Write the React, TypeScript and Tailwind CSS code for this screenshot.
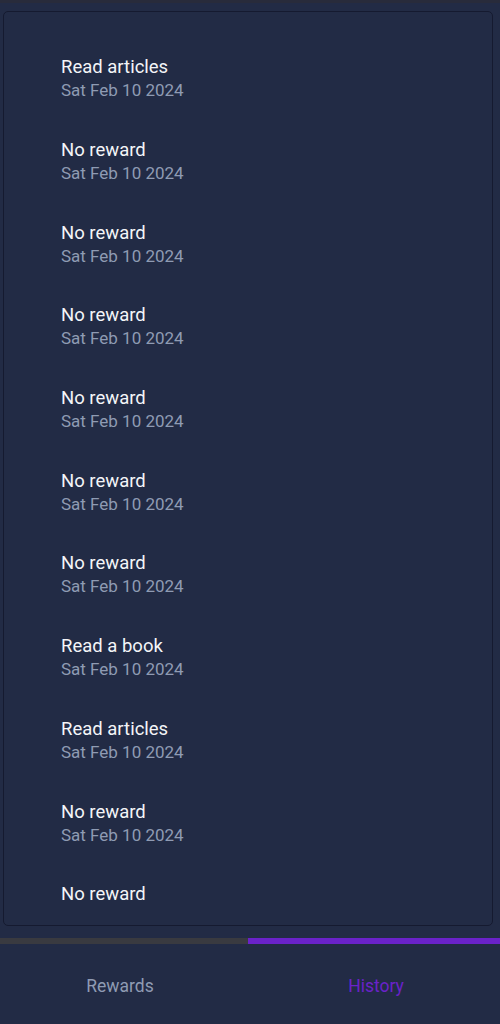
const items: { title: string; date?: string }[] = [
  { title: "Read articles", date: "Sat Feb 10 2024" },
  { title: "No reward", date: "Sat Feb 10 2024" },
  { title: "No reward", date: "Sat Feb 10 2024" },
  { title: "No reward", date: "Sat Feb 10 2024" },
  { title: "No reward", date: "Sat Feb 10 2024" },
  { title: "No reward", date: "Sat Feb 10 2024" },
  { title: "No reward", date: "Sat Feb 10 2024" },
  { title: "Read a book", date: "Sat Feb 10 2024" },
  { title: "Read articles", date: "Sat Feb 10 2024" },
  { title: "No reward", date: "Sat Feb 10 2024" },
  { title: "No reward" },
];

export default function App() {
  return (
    <div className="w-[500px] h-[1024px] bg-[#222b45] flex flex-col overflow-hidden" style={{ fontFamily: "Roboto, 'Noto Sans', sans-serif" }}>
      <div className="h-[3px] bg-[#282b3b] shrink-0" />
      <div className="pt-[8px] pl-[3px] pr-[7px] shrink-0">
        <div className="h-[915px] rounded-[5px] border border-[#151a30] overflow-hidden pt-[26px] pl-[57px]">
          {items.map((it, i) => (
            <div key={i} className="pt-[17.35px] pb-[19.35px]">
              <div className="text-[18.5px] leading-[24px] text-[#f4f5f8]">{it.title}</div>
              {it.date && <div className="text-[17px] leading-[22px] text-[#8f9bb3]">{it.date}</div>}
            </div>
          ))}
        </div>
      </div>
      <div className="mt-[12px] flex h-[6px] shrink-0">
        <div className="w-[248px] bg-[#393a40]" />
        <div className="flex-1 bg-[#6a22c9]" />
      </div>
      <div className="flex flex-1 pt-[4px]">
        <div className="w-[240px] flex items-center justify-center text-[17.5px] text-[#8f9bb3]">Rewards</div>
        <div className="flex-1 flex items-center justify-center pl-[12px] text-[17.5px] text-[#6a22c9]">History</div>
      </div>
    </div>
  );
}
